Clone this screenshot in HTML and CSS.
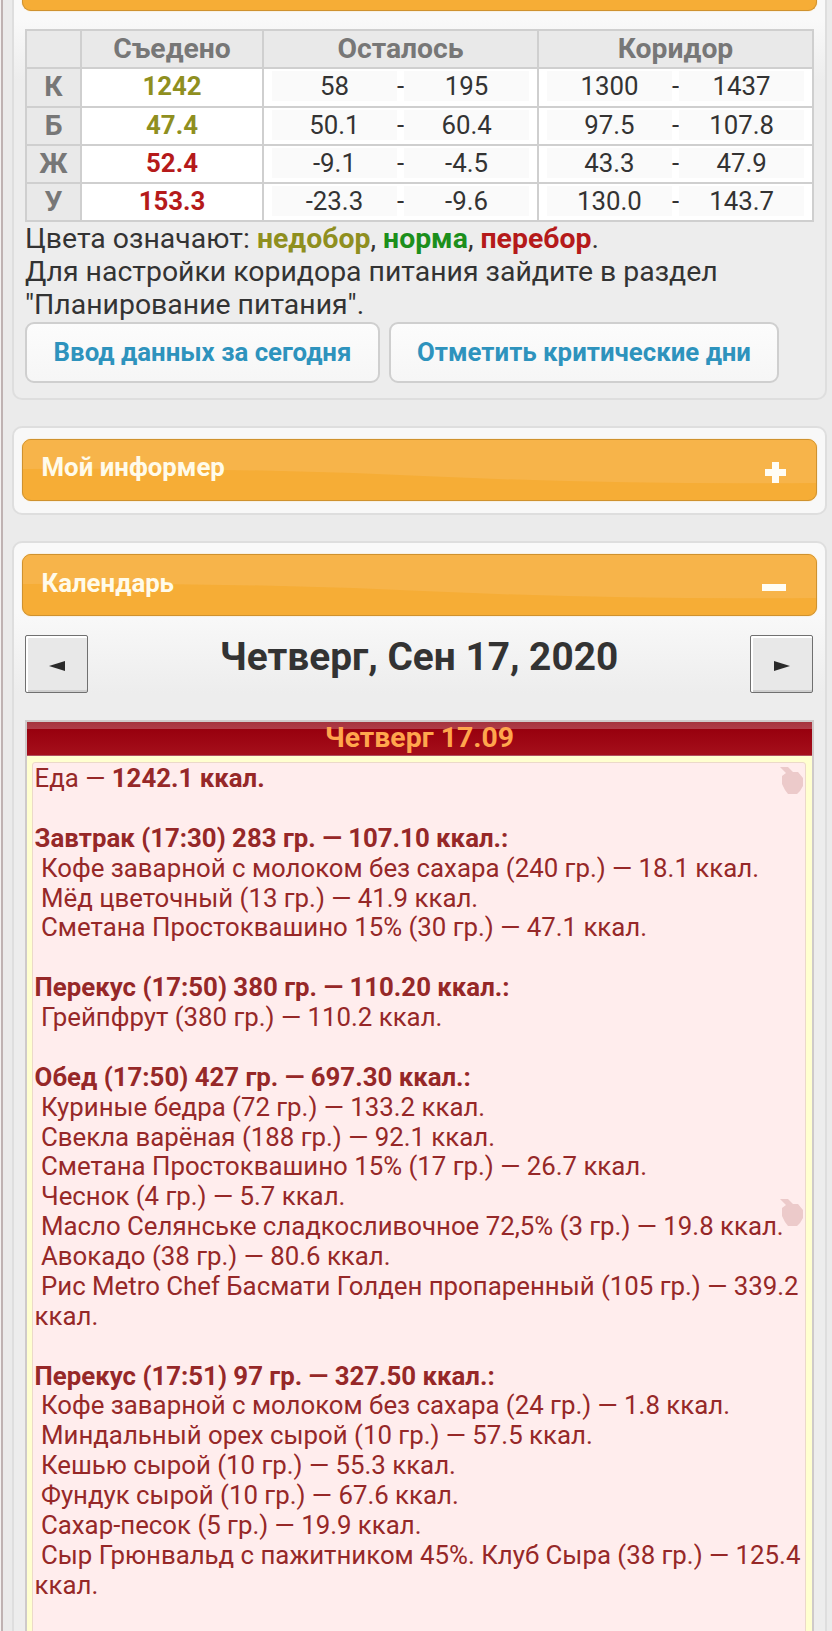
FILE: index.html
```html
<!DOCTYPE html>
<html lang="ru">
  <head>
    <meta charset="UTF-8" />
    <meta name="viewport" content="width=device-width, initial-scale=1.0" />
    <title>Календарь питания</title>

    <link rel="stylesheet" href="styles.css">
  </head>
  <body>
    <div class="page">
      <div class="panel panel-first">
        <div class="bar bar-cut"></div>

        <table class="norms">
          <tr>
            <th class="col-name"></th>
            <th class="col-eaten">Съедено</th>
            <th class="col-range">Осталось</th>
            <th class="col-range">Коридор</th>
          </tr>
          <tr>
            <th>К</th>
            <td class="low">1242</td>
            <td><div class="range"><span>58</span>-<span>195</span></div></td>
            <td><div class="range"><span>1300</span>-<span>1437</span></div></td>
          </tr>
          <tr>
            <th>Б</th>
            <td class="low">47.4</td>
            <td><div class="range"><span>50.1</span>-<span>60.4</span></div></td>
            <td><div class="range"><span>97.5</span>-<span>107.8</span></div></td>
          </tr>
          <tr>
            <th>Ж</th>
            <td class="high">52.4</td>
            <td><div class="range"><span>-9.1</span>-<span>-4.5</span></div></td>
            <td><div class="range"><span>43.3</span>-<span>47.9</span></div></td>
          </tr>
          <tr>
            <th>У</th>
            <td class="high">153.3</td>
            <td><div class="range"><span>-23.3</span>-<span>-9.6</span></div></td>
            <td><div class="range"><span>130.0</span>-<span>143.7</span></div></td>
          </tr>
        </table>

        <div class="legend">
          Цвета означают: <b class="low">недобор</b>, <b class="norm">норма</b>, <b class="high">перебор</b>.<br>
          Для настройки коридора питания зайдите в раздел<br>
          "Планирование питания".
        </div>

        <div class="actions">
          <a class="action action-today">Ввод данных за сегодня</a>
          <a class="action action-days">Отметить критические дни</a>
        </div>
      </div>

      <div class="panel panel-informer">
        <div class="bar">
          <svg class="gloss" viewBox="0 0 794 60" preserveAspectRatio="none"><path d="M0 0H794V43Q600 45 400 36T0 29Z" /></svg>
          <span class="bar-title">Мой информер</span>
          <svg class="sign" viewBox="0 0 24 24"><path d="M8 1h7v7h7v7h-7v7h-7v-7h-7v-7h7z" /></svg>
        </div>
      </div>

      <div class="panel panel-calendar">
        <div class="bar">
          <svg class="gloss" viewBox="0 0 794 60" preserveAspectRatio="none"><path d="M0 0H794V43Q600 45 400 36T0 29Z" /></svg>
          <span class="bar-title bar-title-open">Календарь</span>
          <svg class="sign" viewBox="0 0 24 24"><path d="M-2 8h24v7h-24z" /></svg>
        </div>

        <div class="date-row">
          <button type="button" class="nav"><svg viewBox="0 0 16 10"><path d="M16 0v10L0 5z" /></svg></button>
          <h2>Четверг, Сен 17, 2020</h2>
          <button type="button" class="nav"><svg viewBox="0 0 16 10"><path d="M0 0v10L16 5z" /></svg></button>
        </div>

        <div class="day">
          <div class="day-head">Четверг 17.09</div>
          <div class="day-body">
            <div class="food">
              <svg class="apple apple-top" viewBox="0 0 24 27"><path d="M0 0h8l5 5h5l5 6v8l-3 5-3 3H8l-3-4-3-6V9l4-3z" /></svg>
              <svg class="apple apple-mid" viewBox="0 0 24 27"><path d="M0 0h8l5 5h5l5 6v8l-3 5-3 3H8l-3-4-3-6V9l4-3z" /></svg>
              Еда — <b>1242.1 ккал.</b><br>
              <br>
              <b>Завтрак (17:30) 283 гр. — 107.10 ккал.:</b><br>
              &nbsp;Кофе заварной с молоком без сахара (240 гр.) — 18.1 ккал.<br>
              &nbsp;Мёд цветочный (13 гр.) — 41.9 ккал.<br>
              &nbsp;Сметана Простоквашино 15% (30 гр.) — 47.1 ккал.<br>
              <br>
              <b>Перекус (17:50) 380 гр. — 110.20 ккал.:</b><br>
              &nbsp;Грейпфрут (380 гр.) — 110.2 ккал.<br>
              <br>
              <b>Обед (17:50) 427 гр. — 697.30 ккал.:</b><br>
              &nbsp;Куриные бедра (72 гр.) — 133.2 ккал.<br>
              &nbsp;Свекла варёная (188 гр.) — 92.1 ккал.<br>
              &nbsp;Сметана Простоквашино 15% (17 гр.) — 26.7 ккал.<br>
              &nbsp;Чеснок (4 гр.) — 5.7 ккал.<br>
              &nbsp;Масло Селянське сладкосливочное 72,5% (3 гр.) — 19.8 ккал.<br>
              &nbsp;Авокадо (38 гр.) — 80.6 ккал.<br>
              &nbsp;Рис Metro Chef Басмати Голден пропаренный (105 гр.) — 339.2<br>
              ккал.<br>
              <br>
              <b>Перекус (17:51) 97 гр. — 327.50 ккал.:</b><br>
              &nbsp;Кофе заварной с молоком без сахара (24 гр.) — 1.8 ккал.<br>
              &nbsp;Миндальный орех сырой (10 гр.) — 57.5 ккал.<br>
              &nbsp;Кешью сырой (10 гр.) — 55.3 ккал.<br>
              &nbsp;Фундук сырой (10 гр.) — 67.6 ккал.<br>
              &nbsp;Сахар-песок (5 гр.) — 19.9 ккал.<br>
              &nbsp;Сыр Грюнвальд с пажитником 45%. Клуб Сыра (38 гр.) — 125.4<br>
              ккал.
            </div>
          </div>
        </div>
      </div>
    </div>
  </body>
</html>
```

FILE: styles.css
```css
* {
  box-sizing: border-box;
}
body {
  margin: 0;
  height: 1631px;
  overflow: hidden;
  background: #f3f1f1;
  font-family: Roboto, sans-serif;
  color: #333;
}
.page {
  height: 1631px;
  margin-left: 1px;
  padding: 0 5px 0 9px;
  border-left: 2px solid #bfb2b2;
  background: #ebebeb;
  overflow: hidden;
}
.panel {
  border: 2px solid #dedede;
  border-radius: 10px;
  background: #f8f8f8;
  padding: 12px 8px;
  margin-bottom: 26px;
}
.panel-first {
  height: 400px;
  padding-top: 0;
  border-top: none;
  border-radius: 0 0 10px 10px;
  background: linear-gradient(#f9f9f9 20px, #ededed 80px);
}
.panel-informer {
  height: 89px;
  padding-top: 11px;
}
.panel-calendar {
  height: 1200px;
  padding-top: 11px;
  background: linear-gradient(#f9f9f9 70px, #ededed 150px);
}

/* orange headers */
.bar {
  position: relative;
  display: flex;
  justify-content: space-between;
  height: 62px;
  padding: 0 28px 0 18.5px;
  border: 1px solid #cf922f;
  border-radius: 9px;
  background: #f6ad36;
  box-shadow: 0 0 1px #f6ad35;
  overflow: hidden;
}
.bar-cut {
  height: 11px;
  border-top: none;
  border-radius: 0 0 9px 9px;
}
.gloss {
  position: absolute;
  left: 0;
  top: 0;
  width: 100%;
  height: 100%;
  fill: #f7b44a;
}
.bar-title {
  position: relative;
  font-size: 25.8px;
  font-weight: bold;
  line-height: 55px;
  color: #fffbea;
}
.bar-title-open {
  line-height: 57px;
}
.sign {
  position: relative;
  width: 24px;
  height: 24px;
  margin-top: 21px;
  fill: #fffdf5;
  overflow: visible;
}

/* norms table */
.norms {
  width: 789px;
  margin: 18px 0 0 3px;
  border-collapse: collapse;
  table-layout: fixed;
  font-size: 25.8px;
  text-align: center;
}
.norms th,
.norms td {
  height: 38.3px;
  padding: 0;
  border: 2px solid #cfcfcf;
  line-height: 30px;
}
.norms th {
  background: #e9e9e9;
  color: #777;
  font-size: 28.3px;
}
.norms td {
  padding-bottom: 2px;
  background: #fff;
}
.norms td.low,
.norms td.high {
  font-weight: bold;
}
.norms .col-name {
  width: 55px;
}
.norms .col-eaten {
  width: 182px;
}
.low {
  color: #8f8f1f;
}
.norm {
  color: #1c8f1c;
}
.high {
  color: #b51a1a;
}
.range {
  display: flex;
  justify-content: center;
}
.range span {
  width: 125px;
  background: #fafafa;
}

.legend {
  margin-left: 3px;
  font-size: 28.4px;
  line-height: 33px;
  white-space: nowrap;
}
.actions {
  display: flex;
  gap: 9px;
  margin: 1px 0 0 3px;
}
.action {
  height: 61px;
  border: 2px solid #cfcfcf;
  border-radius: 9px;
  background: linear-gradient(#fcfcfc, #f6f6f6);
  color: #2e93bd;
  font-size: 25.8px;
  font-weight: bold;
  line-height: 57px;
  text-align: center;
  white-space: nowrap;
}
.action-today {
  width: 355px;
}
.action-days {
  width: 390px;
}

/* calendar */
.date-row {
  display: flex;
  justify-content: space-between;
  margin: 19px 4px 0 3px;
}
.date-row h2 {
  margin: 0;
  font-size: 38.8px;
  line-height: 44px;
}
.nav {
  display: flex;
  align-items: center;
  justify-content: center;
  width: 63px;
  height: 58px;
  padding: 3px 0 0;
  border: 1px solid #707070;
  border-radius: 2px;
  background: #e8e8e8;
  box-shadow: inset 2px 2px #fff, inset 0 -2px #cfcfcf;
}
.nav svg {
  width: 16px;
  height: 10px;
  fill: #2a2a2a;
}
.day {
  width: 789px;
  height: 1000px;
  margin: 27px 0 0 3px;
  border: 2px solid #cfcaca;
  background: #ffffd0;
}
.day-head {
  height: 34px;
  border-bottom: 1px solid #b05060;
  background: linear-gradient(#a5333d, #b03c48 7px, #98000e 7px, #a50f1b);
  color: #ffa64d;
  font-size: 28.4px;
  font-weight: bold;
  line-height: 32px;
  text-align: center;
}
.day-body {
  height: 960px;
  padding: 6px 6px 0 5px;
}
.food {
  position: relative;
  height: 950px;
  padding: 1px 0 0 1.6px;
  border: 1px solid #ecd9c9;
  border-radius: 3px;
  background: #ffeded;
  color: #962828;
  font-size: 25.8px;
  line-height: 29.88px;
  white-space: nowrap;
}
.apple {
  position: absolute;
  right: 1px;
  width: 24px;
  height: 27px;
  fill: #eccaca;
}
.apple-top {
  top: 4px;
}
.apple-mid {
  top: 436px;
}
```
